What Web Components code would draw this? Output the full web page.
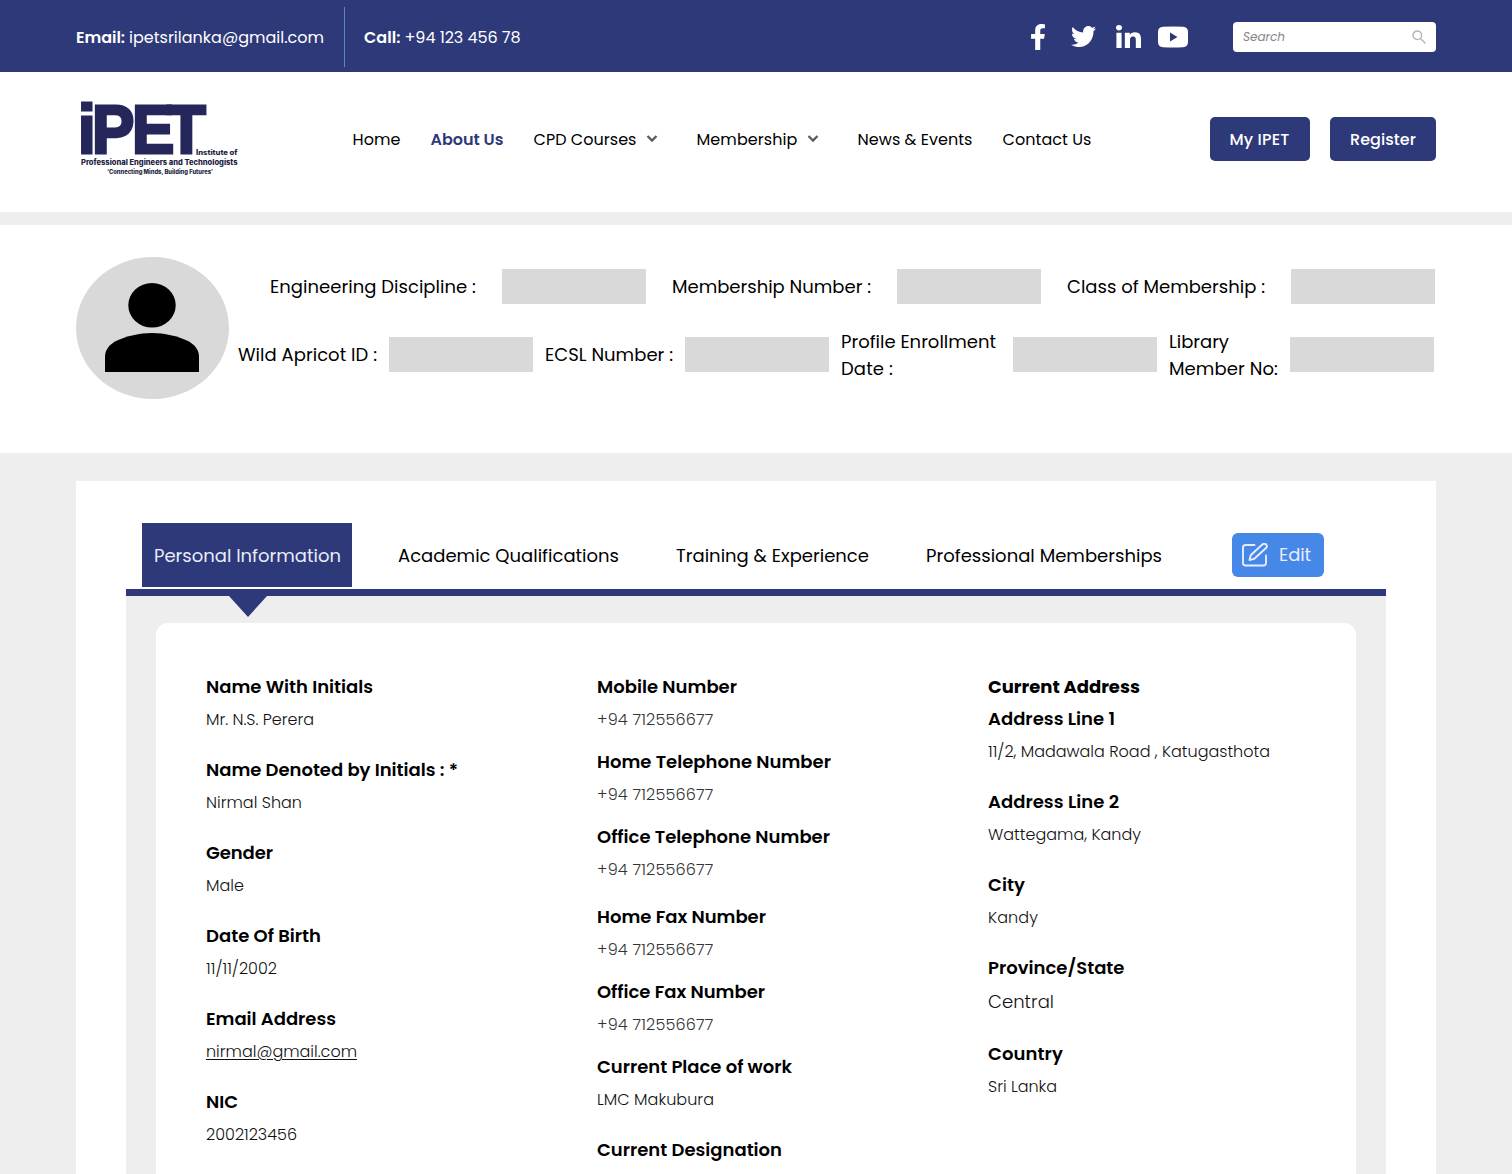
<!DOCTYPE html>
<html lang="en">
<head>
<meta charset="utf-8">
<title>IPET - Profile</title>
<style>
    body {
        margin: 0;
        height: 1174px;
        overflow: hidden;
        background: #eee;
        color: #000;
        font-family: Poppins, Inter, "Open Sans", sans-serif;
        --navy: #2e3979;
    }
</style>
</head>
<body>
<ipet-topbar></ipet-topbar>
<ipet-navbar></ipet-navbar>
<profile-summary></profile-summary>
<profile-card></profile-card>

<script>
// text set to a fixed width, the rest is spread over the letters
class FitText extends HTMLElement {
    constructor() {
        super()
        this.attachShadow({ mode: 'open' }).innerHTML = `
            <style>
                :host {
                    display: inline-block;
                    white-space: nowrap;
                    flex: none;
                }
            </style><slot></slot>`
    }
    connectedCallback() {
        const want = parseFloat(this.getAttribute('w'))
        const count = this.textContent.length
        if (!want || !count) return
        const range = document.createRange()
        range.selectNodeContents(this)
        const natural = range.getBoundingClientRect().width
        this.style.letterSpacing = ((want - natural) / count).toFixed(3) + 'px'
        this.style.width = want + 'px'
    }
}

class TopBar extends HTMLElement {
    constructor() {
        super()
        this.attachShadow({ mode: 'open' }).innerHTML = `
            <style>
                :host {
                    display: flex;
                    align-items: center;
                    box-sizing: border-box;
                    height: 72px;
                    padding: 0 76px;
                    background: var(--navy);
                    color: #fff;
                    font-size: 16px;
                    line-height: 24px;
                }
                .contact { display: flex; align-items: center; gap: 4px; padding-top: 4px; }
                .email { padding-right: 20px; }
                .call { padding-left: 19px; }
                b { font-weight: 600; }
                .line { width: 1px; height: 60px; margin-top: 2px; background: #5b87c8; }
                .social { display: flex; align-items: center; margin-left: auto; padding-top: 1px; }
                .social svg { display: block; fill: #fff; }
                .search {
                    display: flex;
                    align-items: center;
                    justify-content: space-between;
                    box-sizing: border-box;
                    width: 203px;
                    height: 30px;
                    margin: 2px 0 0 45px;
                    padding: 0 10px;
                    border-radius: 4px;
                    background: #fff;
                    color: #85858c;
                    font-size: 12px;
                    font-style: italic;
                }
            </style>
            <div class="contact email"><b><fit-text w="49">Email:</fit-text></b><fit-text w="195">ipetsrilanka@gmail.com</fit-text></div>
            <div class="line"></div>
            <div class="contact call"><b><fit-text w="36.500">Call:</fit-text></b><fit-text w="116">+94 123 456 78</fit-text></div>
            <div class="social">
                <svg width="14" height="26" viewBox="22 0 276 512" preserveAspectRatio="none"><path d="M279.14 288l14.22-92.66h-88.91v-60.13c0-25.35 12.42-50.06 52.24-50.06h40.42V6.26S260.43 0 225.36 0c-73.22 0-121.08 44.38-121.08 124.72v70.62H22.89V288h81.39v224h100.17V288z"/></svg>
                <svg style="margin-left:26px" width="25" height="21" viewBox="0 2.2 24 19.5" preserveAspectRatio="none"><path d="M23.953 4.57a10 10 0 01-2.825.775 4.958 4.958 0 002.163-2.723c-.951.555-2.005.959-3.127 1.184a4.92 4.92 0 00-8.384 4.482C7.69 8.095 4.067 6.13 1.64 3.162a4.822 4.822 0 00-.666 2.475c0 1.71.87 3.213 2.188 4.096a4.904 4.904 0 01-2.228-.616v.06a4.923 4.923 0 003.946 4.827 4.996 4.996 0 01-2.212.085 4.936 4.936 0 004.604 3.417 9.867 9.867 0 01-6.102 2.105c-.39 0-.779-.023-1.17-.067a13.995 13.995 0 007.557 2.209c9.053 0 13.998-7.496 13.998-13.985 0-.21 0-.42-.015-.63A9.935 9.935 0 0024 4.59z"/></svg>
                <svg style="margin-left:20px" width="25" height="23" viewBox="0 0 448 448" preserveAspectRatio="none"><path d="M100.28 448H7.4V148.9h92.88zM53.79 108.1C24.09 108.1 0 83.5 0 53.8a53.79 53.79 0 0 1 107.58 0c0 29.7-24.1 54.3-53.79 54.3zM447.9 448h-92.68V302.4c0-34.7-.7-79.2-48.29-79.2-48.29 0-55.69 37.7-55.69 76.7V448h-92.78V148.9h89.08v40.8h1.3c12.4-23.5 42.69-48.3 87.88-48.3 94 0 111.28 61.9 111.28 142.3V448z"/></svg>
                <svg style="margin-left:17px" width="30" height="22" viewBox="0 0 30 22"><path fill-rule="evenodd" d="M5 .8Q15 0 25 .8 30 1 30 6v10q0 5-5 5.200Q15 22 5 21.200 0 21 0 16V6Q0 1 5 .8zM12 6.500v9l7.500-4.500z"/></svg>
            </div>
            <div class="search">
                <fit-text w="42">Search</fit-text>
                <svg width="14" height="14" viewBox="0 0 14 14" fill="none" stroke="#b4b4b4" stroke-width="1.400"><circle cx="5.300" cy="5.300" r="4.300"/><path d="M8.500 8.500l5 5"/></svg>
            </div>`
    }
}

class NavBar extends HTMLElement {
    constructor() {
        super()
        const chevron = '<svg width="12" height="8" viewBox="0 0 12 8" fill="none" stroke="#5a5a5f" stroke-width="2.300"><path d="M1.500 1L6 5.500 10.500 1"/></svg>'
        this.attachShadow({ mode: 'open' }).innerHTML = `
            <style>
                :host {
                    display: flex;
                    align-items: flex-start;
                    box-sizing: border-box;
                    height: 140px;
                    padding: 0 76px;
                    background: #fff;
                    font-size: 16px;
                    line-height: 24px;
                }
                .logo { display: block; margin-top: 23px; width: 168px; height: 86px; overflow: visible; }
                .logo text { fill: #22233f; font-family: Inter, sans-serif; font-weight: 800; }
                .logo .name {
                    fill: #25265a;
                    stroke: #25265a;
                    stroke-width: 3px;
                    font-family: "Liberation Sans", Arial, sans-serif;
                    font-weight: 700;
                }
                nav { display: flex; align-items: center; height: 134px; margin-left: 108.500px; }
                nav fit-text { padding-top: 2px; }
                nav svg { margin-left: 9.500px; }
                .active { color: var(--navy); font-weight: 600; }
                .actions { display: flex; align-items: center; gap: 20.500px; height: 134px; margin-left: auto; }
                button {
                    height: 44px;
                    padding: 1px 20px 0;
                    border: 0;
                    border-radius: 5px;
                    background: var(--navy);
                    color: #fff;
                    font: inherit;
                    font-weight: 500;
                }
            </style>
            <svg class="logo" viewBox="76 95 168 86">
                <text class="name" transform="scale(.92 1)" x="84.900 100.100 143.600 181.600" y="153.500" font-size="69">iPET</text>
                <text x="196" y="154.500" font-size="7" textLength="41.500" lengthAdjust="spacingAndGlyphs">Institute of</text>
                <text x="81" y="165" font-size="7.400" textLength="156.500" lengthAdjust="spacingAndGlyphs">Professional Engineers and Technologists</text>
                <text x="107" y="174" font-size="5.800" textLength="106" lengthAdjust="spacingAndGlyphs">‘Connecting Minds, Building Futures’</text>
            </svg>
            <nav>
                <fit-text w="48">Home</fit-text>
                <fit-text w="73" class="active" style="margin-left:30px">About Us</fit-text>
                <fit-text w="103" style="margin-left:30px">CPD Courses</fit-text>${chevron}
                <fit-text w="101" style="margin-left:38.500px">Membership</fit-text>${chevron}
                <fit-text w="115" style="margin-left:38.500px">News &amp; Events</fit-text>
                <fit-text w="89" style="margin-left:30px">Contact Us</fit-text>
            </nav>
            <div class="actions">
                <button><fit-text w="60">My IPET</fit-text></button>
                <button><fit-text w="66">Register</fit-text></button>
            </div>`
    }
}

class ProfileSummary extends HTMLElement {
    constructor() {
        super()
        this.attachShadow({ mode: 'open' }).innerHTML = `
            <style>
                :host {
                    display: flex;
                    box-sizing: border-box;
                    height: 228px;
                    margin-top: 13px;
                    padding: 32px 76px 0;
                    background: #fff;
                    font-size: 18px;
                    line-height: 27px;
                }
                .avatar { flex: none; width: 153px; height: 142px; }
                .rows { padding: 12px 0 0 9px; }
                .row { display: flex; align-items: center; height: 35px; }
                .first { gap: 26px; padding-left: 32px; }
                .second { gap: 12px; margin-top: 33.400px; }
                i { flex: none; width: 144px; height: 35px; background: #d9d9d9; }
                .two { display: flex; flex-direction: column; width: 160px; }
                .two.lib { width: 109px; }
                .second > fit-text { margin-top: -1px; }
            </style>
            <svg class="avatar" viewBox="0 0 153 142">
                <ellipse cx="76.500" cy="71" rx="76.500" ry="71" fill="#d9d9d9"/>
                <ellipse cx="76" cy="48.300" rx="23.700" ry="22.300"/>
                <path d="M29 115v-15c0-7 4-12 10-15.500 24-11.500 50-11.500 74 0 6 3.500 10 8.500 10 15.500v15z"/>
            </svg>
            <div class="rows">
                <div class="row first">
                    <fit-text w="206">Engineering Discipline :</fit-text><i></i>
                    <fit-text w="199">Membership Number :</fit-text><i></i>
                    <fit-text w="198">Class of Membership :</fit-text><i></i>
                </div>
                <div class="row second">
                    <fit-text w="139">Wild Apricot ID :</fit-text><i></i>
                    <fit-text w="128">ECSL Number :</fit-text><i></i>
                    <span class="two"><fit-text w="155">Profile Enrollment</fit-text><fit-text w="52">Date :</fit-text></span><i></i>
                    <span class="two lib"><fit-text w="60">Library</fit-text><fit-text w="109">Member No:</fit-text></span><i></i>
                </div>
            </div>`
    }
}

// one label with its value, "pitch" is the distance to the next field
class InfoField extends HTMLElement {
    constructor() {
        super()
        this.attachShadow({ mode: 'open' })
    }
    connectedCallback() {
        const a = name => this.getAttribute(name)
        this.shadowRoot.innerHTML = `
            <style>
                :host { display: flex; flex-direction: column; gap: 6px; height: ${a('pitch') || 83}px; }
                .label { font-size: 18px; font-weight: 600; line-height: 27px; }
                .label.strong { font-weight: 700; }
                .value { font-size: 16px; font-weight: 300; line-height: 27px; color: #111; }
                .value.soft { color: #333; }
                .value.big { font-size: 18px; line-height: 30px; }
                .value.link { text-decoration: underline; text-decoration-thickness: 1px; text-underline-offset: 2px; }
            </style>
            <fit-text class="label ${a('strong') !== null ? 'strong' : ''}" w="${a('lw')}">${a('label')}</fit-text>
            ${a('value') ? `<fit-text class="value ${a('kind') || ''}" w="${a('vw')}">${a('value')}</fit-text>` : ''}`
    }
}

class ProfileTabs extends HTMLElement {
    constructor() {
        super()
        this.attachShadow({ mode: 'open' }).innerHTML = `
            <style>
                :host {
                    display: flex;
                    align-items: center;
                    height: 64px;
                    padding-left: 16px;
                    font-size: 18px;
                    line-height: 27px;
                }
                .current {
                    display: flex;
                    align-items: center;
                    box-sizing: border-box;
                    width: 210px;
                    height: 64px;
                    padding-left: 12px;
                    background: var(--navy);
                    color: #e9ecf8;
                }
                .edit {
                    display: flex;
                    align-items: center;
                    box-sizing: border-box;
                    width: 92px;
                    height: 44px;
                    padding-left: 10px;
                    gap: 11px;
                    border-radius: 6px;
                    background: #4688e8;
                    color: #e9ecfc;
                    line-height: 26px;
                }
            </style>
            <div class="current"><fit-text w="187">Personal Information</fit-text></div>
            <fit-text w="221" style="margin-left:46px">Academic Qualifications</fit-text>
            <fit-text w="193" style="margin-left:57px">Training &amp; Experience</fit-text>
            <fit-text w="236" style="margin-left:57px">Professional Memberships</fit-text>
            <div class="edit" style="margin-left:70px">
                <svg width="26" height="24" viewBox="0 0 26 24" fill="none" stroke="#e9ecfc" stroke-width="1.900" stroke-linejoin="round" stroke-linecap="round">
                    <path d="M12.500 2H3.500Q1 2 1 4.500v15.500Q1 22.500 3.500 22.500h18q2.500 0 2.500-2.500V12.500"/>
                    <path d="M7.500 17l1.200-4.800L20.300 1.500q2-1.500 3.900 0 1.500 1.800-.2 3.500L12.300 15.800z"/>
                </svg>
                <fit-text w="32">Edit</fit-text>
            </div>`
    }
}

class ProfileCard extends HTMLElement {
    constructor() {
        super()
        this.attachShadow({ mode: 'open' }).innerHTML = `
            <style>
                :host {
                    display: block;
                    box-sizing: border-box;
                    height: 693px;
                    margin: 28px 76px 0;
                    padding: 42px 50px 0;
                    background: #fff;
                    overflow: hidden;
                }
                .panel {
                    position: relative;
                    box-sizing: border-box;
                    height: 585px;
                    margin-top: 2px;
                    padding: 27px 30px 0;
                    border-top: 7px solid var(--navy);
                    background: #eee;
                }
                .pointer {
                    position: absolute;
                    left: 103px;
                    top: 0;
                    width: 38px;
                    height: 21px;
                    background: var(--navy);
                    clip-path: polygon(0 0, 100% 0, 50% 100%);
                }
                .sheet {
                    display: grid;
                    grid-template-columns: repeat(3, 391px);
                    box-sizing: border-box;
                    width: 1200px;
                    height: 570px;
                    padding: 50px 0 0 50px;
                    border-radius: 12px 12px 0 0;
                    background: #fff;
                    overflow: hidden;
                }
            </style>
            <profile-tabs></profile-tabs>
            <div class="panel">
                <div class="pointer"></div>
                <div class="sheet">
                    <div>
                        <info-field label="Name With Initials" lw="167" value="Mr. N.S. Perera" vw="108"></info-field>
                        <info-field label="Name Denoted by Initials : *" lw="252" value="Nirmal Shan" vw="96"></info-field>
                        <info-field label="Gender" lw="67" value="Male" vw="38"></info-field>
                        <info-field label="Date Of Birth" lw="115" value="11/11/2002" vw="71"></info-field>
                        <info-field label="Email Address" lw="130" value="nirmal@gmail.com" vw="151" kind="link"></info-field>
                        <info-field label="NIC" lw="32" value="2002123456" vw="91"></info-field>
                    </div>
                    <div>
                        <info-field label="Mobile Number" lw="140" value="+94 712556677" vw="116.500" kind="soft" pitch="75"></info-field>
                        <info-field label="Home Telephone Number" lw="234" value="+94 712556677" vw="116.500" kind="soft" pitch="75"></info-field>
                        <info-field label="Office Telephone Number" lw="233" value="+94 712556677" vw="116.500" kind="soft" pitch="80"></info-field>
                        <info-field label="Home Fax Number" lw="169" value="+94 712556677" vw="116.500" kind="soft" pitch="75"></info-field>
                        <info-field label="Office Fax Number" lw="168" value="+94 712556677" vw="116.500" kind="soft" pitch="75"></info-field>
                        <info-field label="Current Place of work" lw="195" value="LMC Makubura" vw="117"></info-field>
                        <info-field label="Current Designation" lw="185"></info-field>
                    </div>
                    <div>
                        <info-field label="Current Address" lw="152" strong pitch="32"></info-field>
                        <info-field label="Address Line 1" lw="127" value="11/2, Madawala Road , Katugasthota" vw="282"></info-field>
                        <info-field label="Address Line 2" lw="131" value="Wattegama, Kandy" vw="153"></info-field>
                        <info-field label="City" lw="37" value="Kandy" vw="50"></info-field>
                        <info-field label="Province/State" lw="136.500" value="Central" vw="66" kind="big" pitch="86"></info-field>
                        <info-field label="Country" lw="75" value="Sri Lanka" vw="69"></info-field>
                    </div>
                </div>
            </div>`
    }
}

customElements.define('fit-text', FitText)
customElements.define('info-field', InfoField)
customElements.define('profile-tabs', ProfileTabs)
customElements.define('profile-card', ProfileCard)
customElements.define('profile-summary', ProfileSummary)
customElements.define('ipet-navbar', NavBar)
customElements.define('ipet-topbar', TopBar)
</script>
</body>
</html>
